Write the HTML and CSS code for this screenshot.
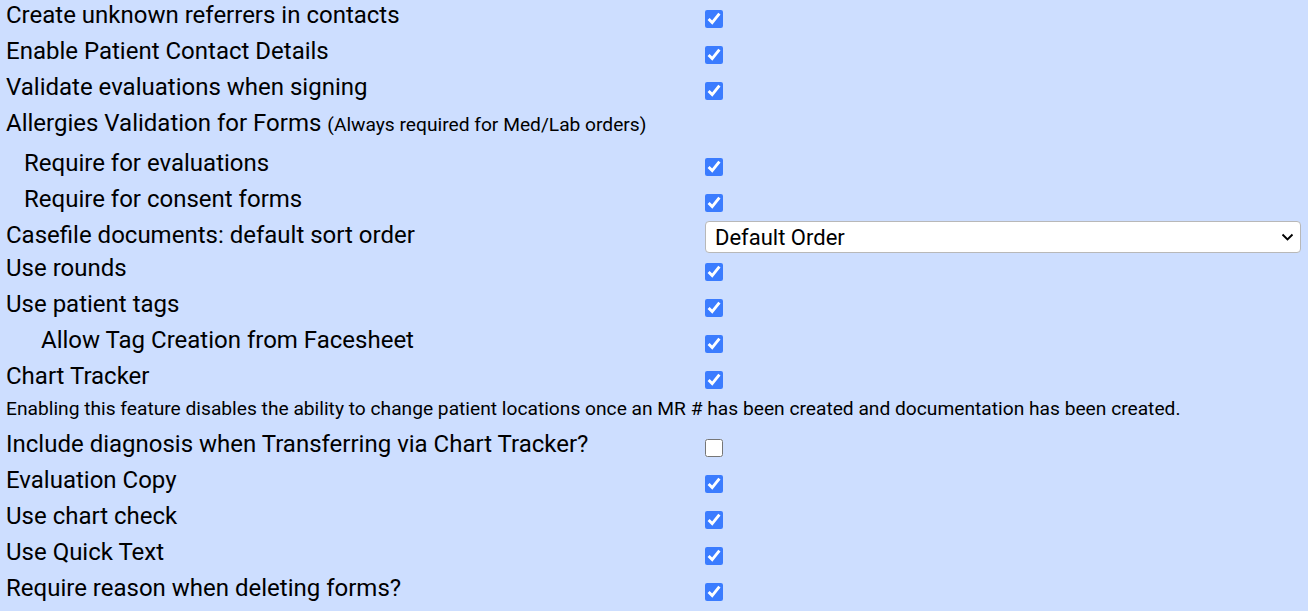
FILE: index.html
```html
<!DOCTYPE html>
<html>
<head>
<meta charset="utf-8">
<link rel="stylesheet" href="styles.css">
</head>
<body>
<div class="settings">
  <div class="row"><div class="label">Create unknown referrers in contacts</div><div class="ctrl"><input type="checkbox" checked></div></div>
  <div class="row"><div class="label">Enable Patient Contact Details</div><div class="ctrl"><input type="checkbox" checked></div></div>
  <div class="row"><div class="label">Validate evaluations when signing</div><div class="ctrl"><input type="checkbox" checked></div></div>
  <div class="row row-tall"><div class="label">Allergies Validation for Forms <span class="hint">(Always required for Med/Lab orders)</span></div><div class="ctrl"></div></div>
  <div class="row"><div class="label indent1">Require for evaluations</div><div class="ctrl"><input type="checkbox" checked></div></div>
  <div class="row"><div class="label indent1">Require for consent forms</div><div class="ctrl"><input type="checkbox" checked></div></div>
  <div class="row row-select"><div class="label">Casefile documents: default sort order</div><div class="ctrl"><select class="sort"><option>Default Order</option></select></div></div>
  <div class="row"><div class="label">Use rounds</div><div class="ctrl"><input type="checkbox" checked></div></div>
  <div class="row"><div class="label">Use patient tags</div><div class="ctrl"><input type="checkbox" checked></div></div>
  <div class="row"><div class="label indent2">Allow Tag Creation from Facesheet</div><div class="ctrl"><input type="checkbox" checked></div></div>
  <div class="row"><div class="label">Chart Tracker</div><div class="ctrl"><input type="checkbox" checked></div></div>
  <div class="row row-note"><div class="note">Enabling this feature disables the ability to change patient locations once an MR # has been created and documentation has been created.</div></div>
  <div class="row"><div class="label">Include diagnosis when Transferring via Chart Tracker?</div><div class="ctrl"><input type="checkbox"></div></div>
  <div class="row"><div class="label">Evaluation Copy</div><div class="ctrl"><input type="checkbox" checked></div></div>
  <div class="row"><div class="label">Use chart check</div><div class="ctrl"><input type="checkbox" checked></div></div>
  <div class="row"><div class="label">Use Quick Text</div><div class="ctrl"><input type="checkbox" checked></div></div>
  <div class="row"><div class="label">Require reason when deleting forms?</div><div class="ctrl"><input type="checkbox" checked></div></div>
</div>
</body>
</html>
```

FILE: styles.css
```css
html, body {
  margin: 0;
  padding: 0;
  background: #cddeff;
}
body {
  font-family: Roboto, "Liberation Sans", sans-serif;
  color: #000;
  height: 611px;
  overflow: hidden;
}
.settings {
  display: flex;
  flex-direction: column;
}
.row {
  display: flex;
  height: 36px;
}
.row-tall { height: 40px; }
.row-select { height: 33px; }
.row-note { height: 32px; }
.label {
  width: 695px;
  padding-left: 6px;
  padding-top: 1px;
  font-size: 24px;
  line-height: 28px;
  white-space: nowrap;
}
.indent1 { padding-left: 24px; width: 677px; }
.indent2 { padding-left: 41px; width: 660px; }
.hint {
  font-size: 19.2px;
}
.ctrl {
  flex: 1;
}
.ctrl input[type="checkbox"] {
  width: 18px;
  height: 18px;
  margin: 10px 0 0 4px;
  accent-color: #3b7cff;
}
.sort {
  -webkit-appearance: none;
  appearance: none;
  width: 596px;
  height: 32px;
  margin: 1px 0 0 4px;
  font-family: Roboto, "Liberation Sans", sans-serif;
  font-size: 22px;
  padding: 0 30px 0 9px;
  color: #000;
  border: 1px solid #b8b8b8;
  border-radius: 4px;
  background: #fff url("data:image/svg+xml;utf8,<svg xmlns='http://www.w3.org/2000/svg' width='13' height='9' viewBox='0 0 13 9'><path d='M1.5 1.5 L6.5 6.5 L11.5 1.5' fill='none' stroke='black' stroke-width='1.9'/></svg>") no-repeat right 6px center;
}
.note {
  padding-left: 6px;
  padding-top: 1px;
  font-size: 19.2px;
  line-height: 22px;
  white-space: nowrap;
}
```
